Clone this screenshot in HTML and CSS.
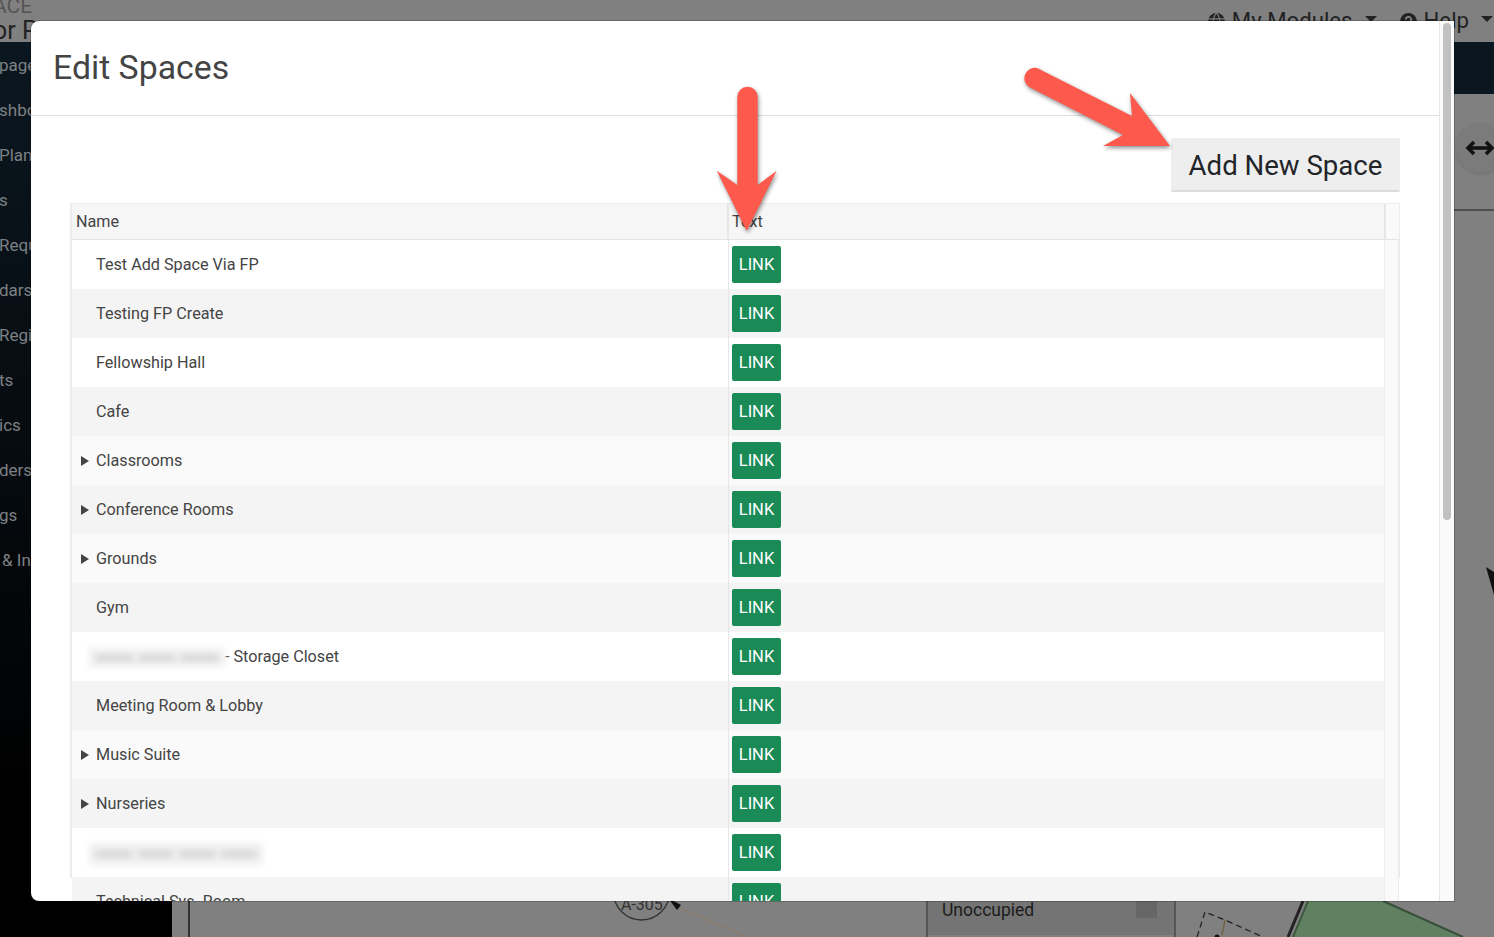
FILE: index.html
```html
<!DOCTYPE html>
<html lang="en">
<head>
    <meta charset="UTF-8">
    <title>Edit Spaces</title>
    <link rel="stylesheet" href="styles.css">
</head>
<body>
    <!-- page behind the dialog -->
    <div class="page">
        <header class="topbar">
            <div class="brand">
                <div class="brand-small">ACE</div>
                <div class="brand-big">or P</div>
            </div>
            <nav class="top-menu">
                <span class="top-item">
                    <svg class="top-icon" viewBox="0 0 16 16"><circle cx="8" cy="8" r="8" fill="#222"/><path d="M0 5.500h16M0 10.500h16M8 0c-4 4-4 12 0 16M8 0c4 4 4 12 0 16" stroke="#808080" stroke-width="1" fill="none"/></svg>
                    My Modules <i class="caret"></i>
                </span>
                <span class="top-item">
                    <svg class="top-icon" viewBox="0 0 16 16"><circle cx="8" cy="8" r="8" fill="#222"/><path d="M5.500 6.200a2.500 2.400 0 1 1 3.600 2.100c-.8.500-1.100.9-1.100 1.700" stroke="#808080" stroke-width="1.700" fill="none"/></svg>
                    Help <i class="caret"></i>
                </span>
            </nav>
        </header>
        <div class="page-body">
            <aside class="sidebar">
                <div class="nav-item">page</div>
                <div class="nav-item">shbo</div>
                <div class="nav-item">Plans</div>
                <div class="nav-item">s</div>
                <div class="nav-item">Requ</div>
                <div class="nav-item">dars</div>
                <div class="nav-item">Regi</div>
                <div class="nav-item">ts</div>
                <div class="nav-item">ics</div>
                <div class="nav-item">ders</div>
                <div class="nav-item">gs</div>
                <div class="nav-item nav-indent">&amp; In</div>
            </aside>
            <main class="plan">
                <div class="plan-band"></div>
                <div class="toggle">
                    <svg width="30" height="20" viewBox="0 0 30 20"><path d="M3 10h24M9 4l-6 6 6 6M21 4l6 6-6 6" stroke="#111" stroke-width="3.500" fill="none"/></svg>
                </div>
                <div class="plan-rule"></div>
                <svg class="plan-art" width="1494" height="937" viewBox="0 0 1494 937">
                    <path d="M1486 567l8 5v23z" fill="#111"/>
                    <path d="M189 901v36" stroke="#333" stroke-width="2"/>
                    <circle cx="641.500" cy="892" r="28" fill="none" stroke="#333" stroke-width="1.300"/>
                    <text x="621" y="910" font-size="16" fill="#333">A-305</text>
                    <path d="M668 898l13 7-4 5z" fill="#111"/>
                    <path d="M680 908l67 29" stroke="#8a7a66" stroke-width="1.300"/>
                    <rect x="927" y="880" width="247" height="55" fill="#747474"/>
                    <path d="M927 880v57M1175 880v57" stroke="#555" stroke-width="2"/>
                    <rect x="1136" y="901" width="21" height="17" fill="#666"/>
                    <path d="M1197 937l8-25 20 8 38 17" stroke="#222" stroke-width="1.300" stroke-dasharray="6 4" fill="none"/>
                    <path d="M1225 920l-3 15" stroke="#6f6040" stroke-width="1.300"/>
                    <circle cx="1217" cy="937" r="2.500" fill="#111"/>
                    <path d="M1308 901h75l80 36H1293z" fill="#617f61"/>
                    <path d="M1383 901l80 36" stroke="#38503a" stroke-width="2"/>
                    <path d="M1308 901l-15 36" stroke="#3c5a3e" stroke-width="2"/>
                    <path d="M1303 901l-15 36" stroke="#222" stroke-width="3"/>
                </svg>
                <div class="plan-text">Unoccupied</div>
            </main>
        </div>
    </div>

    <!-- Edit Spaces dialog -->
    <section class="modal">
        <div class="modal-main">
            <div class="modal-header">
                <h1>Edit Spaces</h1>
            </div>
            <div class="modal-body">
                <div class="actions">
                    <button class="add-btn">Add New Space</button>
                </div>
                <div class="tree">
                    <div class="tree-head">
                        <div class="col-name">Name</div>
                        <div class="col-text">Text</div>
                        <div class="col-gutter"></div>
                    </div>
                    <div class="tree-rows">
                        <div class="row white"><div class="cell-name">Test Add Space Via FP</div><div class="cell-link"><a class="link-btn">LINK</a></div></div>
                        <div class="row grey"><div class="cell-name">Testing FP Create</div><div class="cell-link"><a class="link-btn">LINK</a></div></div>
                        <div class="row white"><div class="cell-name">Fellowship Hall</div><div class="cell-link"><a class="link-btn">LINK</a></div></div>
                        <div class="row grey"><div class="cell-name">Cafe</div><div class="cell-link"><a class="link-btn">LINK</a></div></div>
                        <div class="row pale"><div class="cell-name"><i class="expander"></i>Classrooms</div><div class="cell-link"><a class="link-btn">LINK</a></div></div>
                        <div class="row grey"><div class="cell-name"><i class="expander"></i>Conference Rooms</div><div class="cell-link"><a class="link-btn">LINK</a></div></div>
                        <div class="row pale"><div class="cell-name"><i class="expander"></i>Grounds</div><div class="cell-link"><a class="link-btn">LINK</a></div></div>
                        <div class="row grey"><div class="cell-name">Gym</div><div class="cell-link"><a class="link-btn">LINK</a></div></div>
                        <div class="row white"><div class="cell-name"><span class="blurred blur-short"><i></i><i></i><i></i></span>- Storage Closet</div><div class="cell-link"><a class="link-btn">LINK</a></div></div>
                        <div class="row grey"><div class="cell-name">Meeting Room &amp; Lobby</div><div class="cell-link"><a class="link-btn">LINK</a></div></div>
                        <div class="row pale"><div class="cell-name"><i class="expander"></i>Music Suite</div><div class="cell-link"><a class="link-btn">LINK</a></div></div>
                        <div class="row grey"><div class="cell-name"><i class="expander"></i>Nurseries</div><div class="cell-link"><a class="link-btn">LINK</a></div></div>
                        <div class="row white"><div class="cell-name"><span class="blurred blur-long"><i></i><i></i><i></i><i></i></span></div><div class="cell-link"><a class="link-btn">LINK</a></div></div>
                        <div class="row grey"><div class="cell-name">Technical Sys. Room</div><div class="cell-link"><a class="link-btn">LINK</a></div></div>
                    </div>
                </div>
            </div>
        </div>
        <div class="modal-scroll"><div class="modal-thumb"></div></div>

        <!-- annotation arrows -->
        <svg class="arrow arrow-side" width="150" height="82" viewBox="0 0 150 82">
            <path d="M14 1L109 49L107 26L147 79L80 79L100 68L6 20A10.500 10.500 0 0 1 14 1Z" fill="#fd5a4d"/>
        </svg>
        <svg class="arrow arrow-down" width="64" height="146" viewBox="0 0 64 146">
            <path d="M22.300 10A10.200 10.200 0 0 1 42.700 10V98L61.700 83.700L31.700 144L1.700 83.700L22.300 98Z" fill="#fd5a4d"/>
        </svg>
    </section>
</body>
</html>
```

FILE: styles.css
```css
* {
    box-sizing: border-box;
    margin: 0;
    padding: 0;
}

html, body {
    width: 1494px;
    height: 937px;
    overflow: hidden;
}

body {
    font-family: Roboto, "Liberation Sans", sans-serif;
    background: #808080;
    color: #212529;
    position: relative;
}

/* page behind the dialog */
.page {
    height: 937px;
    display: flex;
    flex-direction: column;
}

.topbar {
    height: 42px;
    background: #808080;
    display: flex;
    justify-content: flex-end;
    overflow: hidden;
    position: relative;
}

.brand {
    position: absolute;
    left: 0;
    top: -5px;
    color: #333;
}

.brand-small {
    font-size: 21px;
    line-height: 22px;
    color: #555;
    margin-left: -7px;
}

.brand-big {
    font-size: 25px;
    line-height: 28px;
    margin-left: -7px;
    color: #222;
}

.top-menu {
    display: flex;
    gap: 23px;
    padding-top: 6px;
    padding-right: 1px;
    font-size: 22.2px;
    color: #222;
}

.top-item {
    display: flex;
    align-items: center;
    height: 28px;
    gap: 7px;
}

.top-icon {
    width: 17px;
    height: 17px;
    margin-top: 2px;
}

.caret {
    display: inline-block;
    border-top: 6px solid #222;
    border-left: 6px solid transparent;
    border-right: 6px solid transparent;
    margin-left: 5px;
    margin-bottom: 2px;
}

.page-body {
    flex: 1;
    display: flex;
    min-height: 0;
}

.sidebar {
    width: 172px;
    background: linear-gradient(#0b1720 0, #050a0e 50%, #000 85%);
    padding-top: 1px;
    color: #7d8084;
    font-size: 17px;
}

.nav-item {
    height: 45px;
    line-height: 45px;
    white-space: nowrap;
    margin-left: -1px;
}

.nav-indent {
    padding-left: 3px;
}

.plan {
    flex: 1;
    position: relative;
    background: #808080;
}

.plan-band {
    height: 52px;
    background: #0b1720;
}

.toggle {
    position: absolute;
    left: 1284px;
    top: 81px;
    width: 50px;
    height: 50px;
    border-radius: 50%;
    background: #7b7b7b;
    box-shadow: 0 1px 3px rgba(0, 0, 0, 0.15);
    padding: 15px 0 0 9px;
}

.plan-rule {
    position: absolute;
    left: 0;
    right: 0;
    top: 167px;
    height: 2px;
    background: #4e4e4e;
}

.plan-art {
    position: absolute;
    left: -172px;
    top: -42px;
}

.plan-text {
    position: absolute;
    left: 770px;
    top: 856px;
    font-size: 17.5px;
    line-height: 24px;
    color: #1c1c1c;
}

/* dialog */
.modal {
    position: absolute;
    left: 31px;
    top: 21px;
    width: 1423px;
    height: 880px;
    background: #fff;
    border-radius: 8px 0 0 8px;
    box-shadow: 0 0 0 1px rgba(0, 0, 0, 0.2);
    overflow: hidden;
    display: flex;
}

.modal-main {
    width: 1409px;
    border-right: 1px solid #e6e6e6;
    overflow: hidden;
}

.modal-header {
    height: 95px;
    border-bottom: 1px solid #dedede;
    padding: 25px 22px 0;
}

h1 {
    font-size: 33.8px;
    font-weight: 400;
    line-height: 44px;
    color: #444;
}

.modal-body {
    padding: 22px 39px 0 39px;
}

.actions {
    display: flex;
    justify-content: flex-end;
    margin-bottom: 11px;
}

.add-btn {
    width: 229px;
    height: 54px;
    border: none;
    border-bottom: 2px solid #dcdcdc;
    border-radius: 2px;
    background: #eeeeee;
    color: #212529;
    font-family: inherit;
    font-size: 27.6px;
    padding-top: 3px;
}

.tree {
    border: 1px solid #ececec;
    border-left-width: 2px;
    height: 675px;
}

.tree-head {
    height: 36px;
    display: flex;
    background: #f6f6f6;
    border-bottom: 1px solid #e4e4e4;
    font-size: 16.2px;
    color: #444;
    line-height: 35px;
}

.col-name {
    width: 657px;
    padding-left: 4px;
    border-right: 2px solid #e6e6e6;
}

.col-text {
    flex: 1;
    padding-left: 3px;
    border-right: 2px solid #e6e6e6;
}

.col-gutter {
    width: 13px;
    background: #fafafa;
}

.tree-rows {
    padding-right: 13px;
    background: #fafafa;
    border-right: 1px solid #ececec;
}

.row {
    height: 49px;
    display: flex;
    font-size: 16.2px;
    color: #444;
    border-right: 1px solid #ececec;
}

.white { background: #fff; }
.grey { background: #f4f4f4; }
.pale { background: #fafafa; }

.cell-name {
    width: 657px;
    padding-left: 24px;
    line-height: 49px;
    position: relative;
    border-right: 1px solid #e6e6e6;
    white-space: nowrap;
}

.cell-link {
    padding: 6px 0 0 3px;
}

.link-btn {
    display: block;
    width: 49px;
    height: 37px;
    border-radius: 2px;
    background: #1a8a57;
    color: #fff;
    font-size: 16.5px;
    line-height: 37px;
    text-align: center;
}

.expander {
    position: absolute;
    left: 9px;
    top: 20px;
    border-left: 8px solid #444;
    border-top: 5px solid transparent;
    border-bottom: 5px solid transparent;
}

/* redacted names */
.blurred {
    display: inline-flex;
    align-items: center;
    gap: 6px;
    padding: 0 7px;
    background: #f0f0f0;
    filter: blur(3px);
    vertical-align: middle;
    margin-left: -7px;
}

.blurred i {
    flex: 1;
    height: 6px;
    background: #d4d4d4;
}

.blur-short {
    width: 136px;
    height: 19px;
}

.blur-long {
    width: 174px;
    height: 22px;
}

.modal-scroll {
    flex: 1;
    padding: 2px 3px 0 3px;
    background: #fafafa;
}

.modal-thumb {
    width: 8px;
    height: 497px;
    border-radius: 4px;
    background: #c1c1c1;
}

.arrow {
    position: absolute;
    overflow: visible;
    filter: drop-shadow(1px 2px 2px rgba(0, 0, 0, 0.45));
}

.arrow-side {
    left: 992px;
    top: 46px;
}

.arrow-down {
    left: 684px;
    top: 66px;
}
```
